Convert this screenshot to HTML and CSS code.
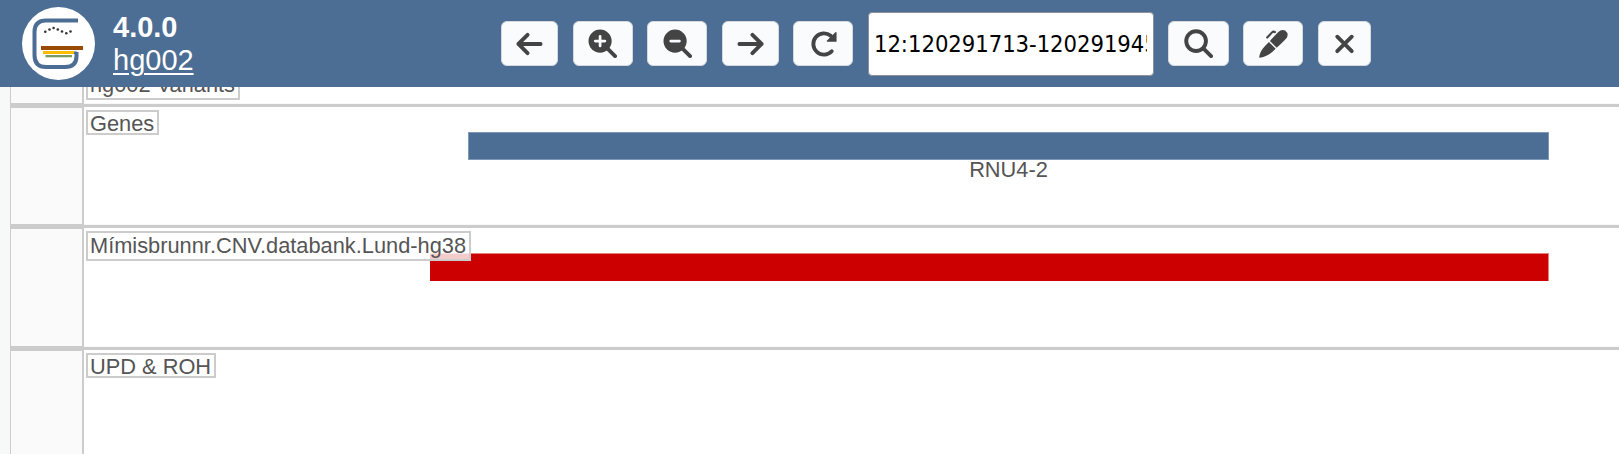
FILE: index.html
```html
<!DOCTYPE html>
<html lang="en">
<head>
<meta charset="utf-8">
<title>Gens - hg002</title>
<link rel="stylesheet" href="styles.css">
</head>
<body>
<header class="toolbar">
  <svg class="logo" viewBox="0 0 73 73">
    <circle cx="36.5" cy="36.5" r="36.5" fill="#fff"/>
    <path d="M56 13.500H24Q12.500 13.500 12.500 25V48Q12.500 60 24 60H43Q54.500 60 54.500 49V45" fill="none" stroke="#4c6e94" stroke-width="4"/>
    <path d="M48 44.500H55V47H48z" fill="#4c6e94"/>
    <path d="M19 39h42v4H19z" fill="#994a05"/>
    <path d="M21 44h31v3H21z" fill="#fabc05"/>
    <path d="M23.500 48H50v2.300H23.500z" fill="#789c63"/>
    <g fill="#333"><circle cx="23.300" cy="24.800" r="1.300"/><circle cx="27.500" cy="22.500" r="1.300"/><circle cx="31.600" cy="21" r="1.300"/><circle cx="35.800" cy="22.500" r="1.300"/><circle cx="40" cy="24.500" r="1.300"/><circle cx="44.300" cy="26.300" r="1.300"/><circle cx="48.500" cy="24.500" r="1.300"/></g>
  </svg>
  <div class="brand"><span class="version">4.0.0</span><a class="sample">hg002</a></div>
  <nav class="controls">
    <button class="btn narrow"><svg viewBox="0 0 30 30"><path d="M26.500 15.500H3.500M13 6L3.500 15.500L13 25"/></svg></button>
    <button class="btn"><svg viewBox="0 0 30 30"><circle class="solid" cx="12.500" cy="12.500" r="12"/><path d="M21 21l7 7"/><path class="cut" d="M7.500 12.500h10M12.500 7.500v10"/></svg></button>
    <button class="btn"><svg viewBox="0 0 30 30"><circle class="solid" cx="12.500" cy="12.500" r="12"/><path d="M21 21l7 7"/><path class="cut" d="M8 12.500h9"/></svg></button>
    <button class="btn narrow"><svg viewBox="0 0 30 30"><path d="M3.500 15.500H26.500M17 6L26.500 15.500L17 25"/></svg></button>
    <button class="btn"><svg viewBox="0 0 30 30"><path d="M23.500 23A11 11 0 1 1 22.500 7L25 9.500"/><path class="solid" d="M27.300 3.300Q28.500 2.700 28.500 4V13.300H19.200Q17.700 13.100 18.700 11.900z"/></svg></button>
    <input class="region" type="text" value="12:120291713-120291945">
    <button class="btn wide"><svg viewBox="0 0 30 30"><circle cx="12.500" cy="12.500" r="10.200"/><path d="M20.500 20.500l7.500 7.500"/></svg></button>
    <button class="btn"><svg viewBox="0 0 30 30"><path class="solid" d="M11.300 12.300L19.700 3.400Q23 0 27 1.500Q31 4.500 28.800 9Q28 10.300 18.300 19.500zM10.300 13.500L17.200 20.500C12 26 7.500 28.700 1 29.700Q0 29.700.300 28.500C1.600 22.500 4.500 19 10.300 13.500z"/><path class="clip" d="M8.500 8.800L13.500 3.500Q15 2 16.500 3.200"/></svg></button>
    <button class="btn small"><svg viewBox="0 0 30 30"><path d="M7.500 8l15 15M22.500 8l-15 15"/></svg></button>
  </nav>
</header>
<main class="tracks">
  <section class="track first"><div class="gutter"></div><div class="lane"><span class="label">hg002 Variants</span></div></section>
  <section class="track"><div class="gutter"></div><div class="lane"><span class="label">Genes</span><div class="bar gene"></div><span class="gene-name">RNU4-2</span></div></section>
  <section class="track lower"><div class="gutter"></div><div class="lane"><span class="label tall">Mímisbrunnr.CNV.databank.Lund-hg38</span><div class="bar cnv"></div></div></section>
  <section class="track lower"><div class="gutter"></div><div class="lane"><span class="label">UPD &amp; ROH</span></div></section>
</main>
</body>
</html>
```
FILE: styles.css
```css
* { box-sizing: border-box; }
body {
  margin: 0;
  height: 454px;
  overflow: hidden;
  background: #f7f9f8;
  font-family: "Liberation Sans", Arial, sans-serif;
}
.toolbar {
  position: relative;
  z-index: 2;
  display: flex;
  height: 87px;
  background: #4c6e94;
}
.logo { width: 73px; height: 73px; margin: 7px 18px 0 22px; flex: none; }
.brand {
  display: flex;
  flex-direction: column;
  width: 388px;
  padding-top: 11px;
  color: #fff;
  font-size: 29px;
  line-height: 33px;
}
.version { font-weight: bold; }
.sample { text-decoration: underline; text-decoration-thickness: 2px; text-underline-offset: 3px; }
.controls { display: flex; align-items: center; gap: 14.6px; }
.btn {
  display: flex;
  align-items: center;
  justify-content: center;
  width: 60px;
  height: 45px;
  padding: 0;
  border: 1px solid #d5d9dd;
  border-radius: 6px;
  background: #fafbfd;
}
.btn.narrow { width: 57px; }
.btn.wide { width: 61px; }
.btn.small { width: 53px; }
.btn svg {
  width: 29px;
  height: 29px;
  fill: none;
  stroke: #444;
  stroke-width: 4;
  stroke-linecap: round;
  stroke-linejoin: round;
}
.btn .solid { fill: #444; stroke: none; }
.btn .cut { stroke: #fafbfd; stroke-width: 2.800; }
.btn .clip { stroke-width: 2.200; }
.region {
  width: 286px;
  height: 64px;
  margin-right: -1px;
  padding: 1px 6px 0 5px;
  border: 1px solid #8f8f9d;
  border-radius: 4px;
  background: #fff;
  color: #000;
  font: 23.600px "DejaVu Sans Condensed", "DejaVu Sans", sans-serif;
  font-stretch: condensed;
  letter-spacing: -.05px;
}
.tracks { margin-left: 10px; border-left: 1px solid #ccc; }
.track { display: flex; height: 121px; }
.track.lower { height: 122px; }
.track.first { height: 16px; }
.gutter {
  width: 73px;
  border-top: 5px solid #ccc;
  border-right: 2px solid #ccc;
  background: #fafafa;
}
.lane {
  position: relative;
  flex: 1;
  margin-top: 1px;
  border-top: 3px solid #ccc;
  background: #fff;
}
.first .gutter, .first .lane { margin: 0; border-top: 0; }
.label {
  position: absolute;
  z-index: 1;
  top: 3px;
  left: 1.500px;
  height: 25px;
  padding: 0 3px 0 2.500px;
  border: 2px solid #ccc;
  background: rgba(255, 255, 255, .8);
  color: #555;
  font-size: 21.800px;
  line-height: 23px;
  white-space: nowrap;
}
.label.tall { height: 30px; line-height: 25px; }
.first .label { top: -17px; height: 30px; line-height: 25px; }
.bar { position: absolute; top: 25px; right: 70px; height: 28px; }
.gene { left: 384px; background: #4c6e94; border: 1px solid #7e98b5; }
.cnv { left: 346px; background: #c00; border-top: 1px solid #e58080; border-right: 1px solid #e58080; }
.gene-name {
  position: absolute;
  top: 50px;
  left: 384px;
  right: 70px;
  color: #555;
  font-size: 21.800px;
  line-height: 25px;
  text-align: center;
}
```
